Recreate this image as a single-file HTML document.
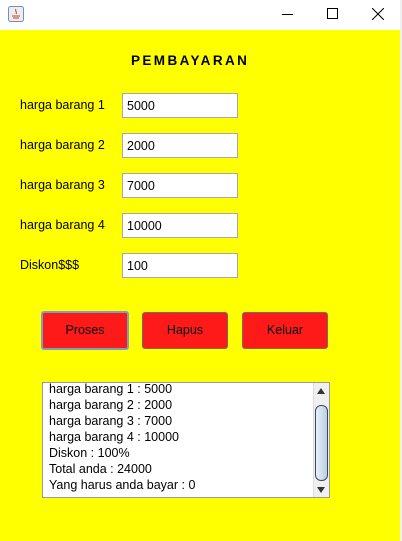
<!DOCTYPE html><html><head><style>
*{margin:0;padding:0;box-sizing:border-box}
body{width:402px;height:541px;overflow:hidden;background:#fff;font-family:"Liberation Sans",sans-serif;position:relative}
.tb{position:absolute;left:0;top:0;width:402px;height:30px;background:#fff}
.main{position:absolute;left:0;top:30px;width:400px;height:511px;background:#ffff00}
.edge{position:absolute;left:400px;top:0;width:2px;height:541px;background:#f0f0f0}
.t{position:absolute;font-size:12.5px;color:#000}
.f{position:absolute;left:122px;width:116px;height:25px;background:#fff;border:1px solid #a9a9a9;font-size:12.5px;padding:5px 0 0 4px}
.b{position:absolute;top:312px;height:37px;background:#ff1a1a;border:1px solid #7a6a6a;border-radius:3px;font-size:12.5px;text-align:center;line-height:35px}
</style></head><body>
<div class="tb">
<svg style="position:absolute;left:8px;top:6px" width="16" height="16"><rect x=".5" y=".5" width="15" height="15" rx="2" fill="#e8eef6" stroke="#7a8ea8"/><path d="M8 3c-2 2 2 3 0 5M4 10h8M5 12h6" stroke="#e0602a" stroke-width="1.2" fill="none"/></svg>
<div style="position:absolute;left:282px;top:14px;width:11px;height:1px;background:#000"></div>
<div style="position:absolute;left:327px;top:8px;width:11px;height:11px;border:1px solid #000"></div>
<svg style="position:absolute;left:372px;top:8px" width="12" height="12"><path d="M0 0L12 12M12 0L0 12" stroke="#000"/></svg>
</div>
<div class="main"></div><div class="edge"></div>
<div class="t" style="left:131px;top:53px;font-weight:bold;font-size:13.5px;letter-spacing:2.4px">PEMBAYARAN</div>
<div class="t" style="left:20px;top:98px">harga barang 1</div><div class="f" style="top:93px">5000</div>
<div class="t" style="left:20px;top:138px">harga barang 2</div><div class="f" style="top:133px">2000</div>
<div class="t" style="left:20px;top:178px">harga barang 3</div><div class="f" style="top:173px">7000</div>
<div class="t" style="left:20px;top:218px">harga barang 4</div><div class="f" style="top:213px">10000</div>
<div class="t" style="left:20px;top:258px">Diskon$$$</div><div class="f" style="top:253px">100</div>
<div class="b" style="left:41px;top:311px;width:88px;height:39px;border:2px solid #7aa0c8;line-height:35px">Proses</div>
<div class="b" style="left:142px;width:86px">Hapus</div>
<div class="b" style="left:242px;width:86px">Keluar</div>
<div style="position:absolute;left:42px;top:382px;width:288px;height:116px;background:#fff;border:1px solid #9a9a9a;overflow:hidden">
<div style="position:absolute;left:6px;top:-2px;font-size:12.5px;line-height:16px">harga barang 1 : 5000<br>harga barang 2 : 2000<br>harga barang 3 : 7000<br>harga barang 4 : 10000<br>Diskon : 100%<br>Total anda : 24000<br>Yang harus anda bayar : 0</div>
<div style="position:absolute;left:270px;top:0;width:16px;height:114px;background:#eef0f2;border-left:1px solid #ddd">
<div style="position:absolute;left:3px;top:5px;border:4px solid transparent;border-bottom:6px solid #333;border-top:0"></div>
<div style="position:absolute;left:1px;top:22px;width:13px;height:76px;border:1px solid #445;border-radius:6px;background:linear-gradient(90deg,#e8f0f8,#b8d0e8)"></div>
<div style="position:absolute;left:3px;top:104px;border:4px solid transparent;border-top:6px solid #333;border-bottom:0"></div>
</div></div>
</body></html>
